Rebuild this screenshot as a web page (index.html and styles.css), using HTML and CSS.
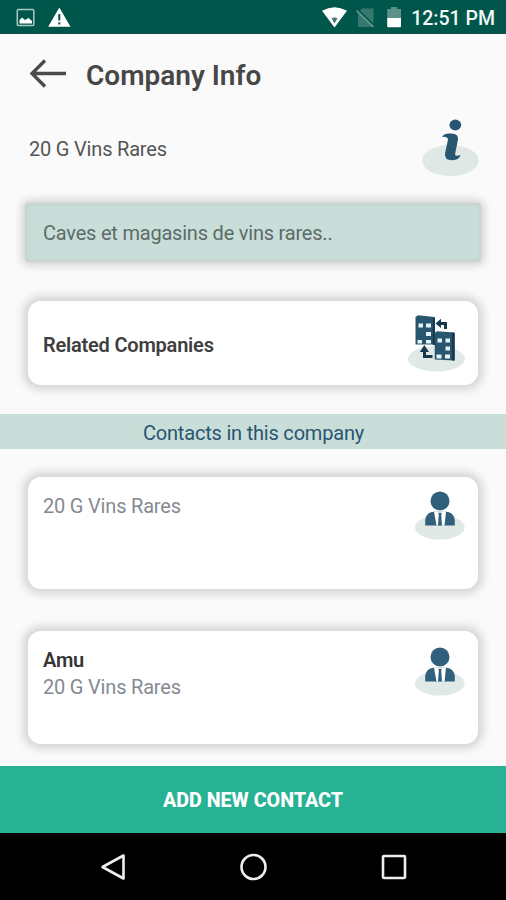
FILE: index.html
```html
<!DOCTYPE html>
<html lang="en">
<head>
<meta charset="utf-8">
<title>Company Info</title>
<link rel="stylesheet" href="styles.css">
</head>
<body>
<svg class="defs" width="0" height="0" aria-hidden="true">
  <symbol id="person" viewBox="0 0 50 52">
    <ellipse cx="24.8" cy="38.4" rx="24.8" ry="12.2" fill="#e0e9e6"/>
    <circle cx="25" cy="12" r="9.5" fill="#31607c"/>
    <path d="M10.2 36.5V31Q11 23.500 18.5 22.700H31.500Q39 23.500 39.800 31V36.500Z" fill="#31607c"/>
    <path d="M19 22.700H31L29.500 36.500H21.500Z" fill="#fff"/>
    <path d="M23.300 23.800H26.700L26.200 26L27 36.500H23L23.800 26Z" fill="#31607c"/>
  </symbol>
</svg>
<div class="screen">
  <header class="status">
    <svg class="status-left" width="60" height="26" viewBox="14 4 60 26">
      <rect x="17.300" y="9.500" width="16.500" height="16" rx="1" fill="none" stroke="#a9c9c2" stroke-width="1.500"/>
      <path d="M19.500 23.500V20L22 17.500L25 20L28.500 18L32 21V23.500Z" fill="#fff"/>
      <path d="M59.300 7.500L70.500 26.800H48.200Z" fill="#fff"/>
      <path d="M59.300 14V20.500M59.300 22.200V24.500" stroke="#00564a" stroke-width="2"/>
    </svg>
    <svg class="status-right" width="84" height="26" viewBox="320 4 84 26">
      <path d="M322 10.800Q334.500 3.500 347 10.800L334.500 27.500Z" fill="#fff"/>
      <path d="M331.500 18.200Q334.500 16.800 337.500 18.200L334.500 23.500Z" fill="#49776f"/>
      <path d="M362 8.500H373.500V27H358V13Z" fill="#35786e"/>
      <path d="M356.500 8.800L374 26" stroke="#00564a" stroke-width="2.500"/>
      <path d="M356.500 10.500L373.500 27" stroke="#6a9a92" stroke-width="1.700"/>
      <path d="M387.200 9H391V7H397V9H401V18H387.200Z" fill="#5b928a"/>
      <path d="M387.200 18H401V26.200Q401 27.200 400 27.200H388.200Q387.200 27.200 387.200 26.200Z" fill="#fff"/>
    </svg>
    <span class="clock">12:51 PM</span>
  </header>
  <main class="content">
    <div class="title-bar">
      <svg width="38" height="30" viewBox="29 59 38 30" fill="none" stroke="#4b4b4b" stroke-width="3.400"><path d="M66 73.500H32M45 60.500L32 73.500L45 86.500"/></svg>
      <h1>Company Info</h1>
    </div>
    <div class="company">
      <span>20 G Vins Rares</span>
      <svg width="58" height="60" viewBox="422 118 58 60">
        <ellipse cx="450.400" cy="160.500" rx="28.200" ry="15.500" fill="#dfe8e5"/>
        <ellipse cx="455.300" cy="125" rx="5.900" ry="5.400" fill="#285670"/>
        <path d="M442 137Q443.500 133.500 449 133.500Q458.800 132.500 458 139.500L455 154.500Q455.500 156.800 460.500 155Q459.500 159.700 452.500 160.200Q444.300 160.500 445 153.500L448 139.500Q447.500 136.300 442 137Z" fill="#285670"/>
      </svg>
    </div>
    <div class="description"><span>Caves et magasins de vins rares..</span></div>
    <section class="card related">
      <span>Related Companies</span>
      <svg width="58" height="60" viewBox="408 313 58 60">
        <ellipse cx="436.500" cy="358.800" rx="28.500" ry="12.700" fill="#e0e9e6"/>
        <path d="M415.500 317L418 315.200L434.500 317V344.500H415.500Z" fill="#285670"/>
        <path d="M432.800 317.500H435V345H432.800Z" fill="#17384d"/>
        <path d="M434.700 333L437 331.200L454.500 332.500V360.500L434.700 359.500Z" fill="#285670"/>
        <path d="M452 332.500L454.700 333V360.500H452Z" fill="#17384d"/>
        <path d="M418.500 323.500h4.500v4h-4.500zM426 323.500h5v4h-5zM426 332h5v4h-5zM417.500 340h4.500v3.500h-4.500zM426 340h5v3.500h-5zM437.500 338.500h4.500v4h-4.500zM445.500 338.500h4.500v4h-4.500zM445.500 346.500h4.500v4h-4.500zM436.500 354.500h5v4h-5zM445 354.500h5v4h-5z" fill="#e8f1f4"/>
        <path d="M439 323.500H445.500V329" fill="none" stroke="#17384d" stroke-width="3"/>
        <path d="M435.500 323.500L441 318.800V328Z" fill="#17384d"/>
        <path d="M424.500 351V356.500H432.500" fill="none" stroke="#17384d" stroke-width="3"/>
        <path d="M424.300 345L429 352H419.800Z" fill="#17384d"/>
      </svg>
    </section>
    <h2 class="section-title"><span>Contacts in this company</span></h2>
    <section class="card contact">
      <div class="contact-text"><span>20 G Vins Rares</span></div>
      <svg width="50" height="52"><use href="#person"/></svg>
    </section>
    <section class="card contact named">
      <div class="contact-text"><strong>Amu</strong><span>20 G Vins Rares</span></div>
      <svg width="50" height="52"><use href="#person"/></svg>
    </section>
  </main>
  <button class="add">ADD NEW CONTACT</button>
  <nav class="nav">
    <svg width="30" height="30" viewBox="0 0 30 30"><path d="M26.500 3.500V26.500L5.500 15Z"/></svg>
    <svg width="30" height="30" viewBox="0 0 30 30"><circle cx="15.500" cy="15" r="12"/></svg>
    <svg width="30" height="30" viewBox="0 0 30 30"><rect x="4" y="4" width="22" height="22" rx="1"/></svg>
  </nav>
</div>
</body>
</html>
```
FILE: styles.css
```css
* { box-sizing: border-box; }
body { margin: 0; font-family: Roboto, "Liberation Sans", sans-serif; color: #454545; }
.defs { display: block; }
svg { display: block; flex: none; }
span, strong { white-space: nowrap; }
.screen { width: 506px; height: 900px; display: flex; flex-direction: column; background: #fafafa; overflow: hidden; }
.status { height: 34px; flex: none; display: flex; align-items: flex-start; padding: 4px 11px 0 14px; background: #00564a; border-bottom: 1px solid #1f4b43; }
.status-right { margin-left: auto; }
.clock { margin-left: 7px; font-size: 19.5px; line-height: 29px; font-weight: 500; color: #f2f8f6; }
.content { height: 732px; flex: none; }
.title-bar { height: 80px; padding: 0 29px; display: flex; align-items: center; gap: 19px; }
.title-bar h1 { margin: 3px 0 0; font-size: 28px; line-height: 32px; font-weight: 600; color: #474747; }
.company { height: 60px; margin-top: 4px; padding: 0 26px 0 29px; display: flex; align-items: center; justify-content: space-between; font-size: 20px; letter-spacing: -0.19px; color: #555; }
.company span { margin-top: 2px; }
.description { height: 59px; margin: 25px 25px 0; padding: 0 18px; display: flex; align-items: center; border-radius: 4px; background: #c9ded9; box-shadow: 0 0 8px 3px #d0d0d0, inset 0 0 5px 1px #c4cecb; font-size: 20px; letter-spacing: -0.21px; color: #5d6b68; }
.card { margin: 0 28px; display: flex; justify-content: space-between; border-radius: 13px; background: #fff; box-shadow: 0 0 8px 5px #d5d5d5; }
.related { height: 84px; margin-top: 39px; padding: 0 12px 0 15px; align-items: center; font-size: 20px; letter-spacing: -0.21px; font-weight: 600; color: #3e3e3e; }
.related span { margin-top: 4px; }
.section-title { height: 35px; margin: 29px 0 0; display: flex; align-items: center; justify-content: center; background: #c9ded9; font-size: 20px; letter-spacing: -0.2px; font-weight: 400; color: #295570; }
.section-title span { margin: 3px 0 0 1px; }
.contact { height: 112px; margin-top: 28px; padding: 12px 13px 0 15px; font-size: 20px; letter-spacing: -0.19px; }
.contact.named { height: 113px; margin-top: 42px; padding-top: 14px; }
.contact-text { display: flex; flex-direction: column; align-items: flex-start; line-height: 27px; margin-top: 4px; color: #858a92; }
.named .contact-text { margin-top: 2px; }
.contact strong { font-weight: 600; color: #353535; }
.add { height: 67px; flex: none; border: 0; padding: 2px 0 0; background: #28b294; color: #fff; font: 800 19.7px Roboto, "Liberation Sans", sans-serif; }
.nav { height: 67px; flex: none; padding: 0 97px; display: flex; align-items: center; justify-content: space-between; background: #000; }
.nav svg { fill: none; stroke: #eee; stroke-width: 2.6; stroke-linejoin: round; }
```
